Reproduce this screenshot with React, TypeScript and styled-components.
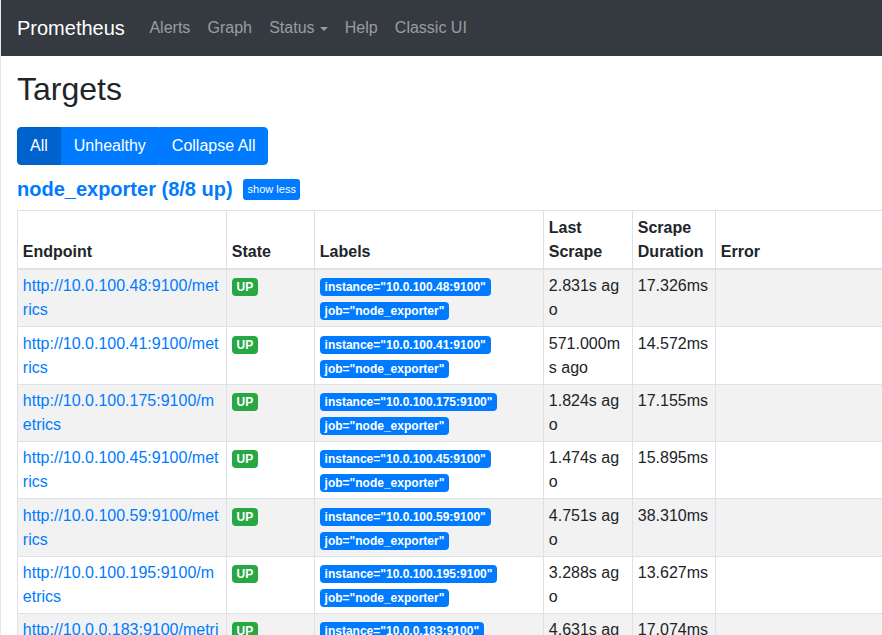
import React from "react";
import styled, { createGlobalStyle } from "styled-components";

const GlobalStyle = createGlobalStyle`
  html, body {
    margin: 0;
    padding: 0;
    overflow: hidden;
    background: #fff;
    font-family: "Liberation Sans", Arial, sans-serif;
    font-size: 16px;
    line-height: 1.5;
    color: #212529;
  }
  body {
    border-left: 1px solid #e4e9f0;
  }
`;

const Navbar = styled.nav`
  height: 56px;
  background: #343a40;
  display: flex;
  align-items: center;
  padding: 0 16px;
  box-sizing: border-box;
`;

const Brand = styled.a`
  color: #fff;
  font-size: 20px;
  line-height: 30px;
  margin-right: 16px;
  text-decoration: none;
`;

const NavLink = styled.a`
  color: rgba(255, 255, 255, 0.5);
  padding: 8px 8.6px;
  text-decoration: none;
  display: flex;
  align-items: center;
`;

const Caret = styled.span`
  display: inline-block;
  margin-left: 5px;
  border-top: 4.5px solid;
  border-right: 4.5px solid transparent;
  border-left: 4.5px solid transparent;
  margin-top: 1px;
`;

const Page = styled.main`
  padding: 0 0 0 16px;
`;

const Title = styled.h2`
  font-size: 32px;
  font-weight: 400;
  line-height: 1.2;
  margin: 14px 0 19px;
`;

const ButtonGroup = styled.div`
  display: inline-flex;
`;

const GroupButton = styled.button<{ $active?: boolean }>`
  font-family: inherit;
  font-size: 16px;
  line-height: 24px;
  padding: 6px 12px;
  border: 1px solid ${(p) => (p.$active ? "#005cbf" : "#007bff")};
  background: ${(p) => (p.$active ? "#0062cc" : "#007bff")};
  color: #fff;
  &:first-child {
    border-radius: 4px 0 0 4px;
  }
  &:last-child {
    border-radius: 0 4px 4px 0;
  }
`;

const JobHeader = styled.div`
  display: flex;
  align-items: center;
  margin: 12px 0 9px;
  height: 24px;
`;

const JobTitle = styled.a`
  color: #007bff;
  font-size: 20px;
  font-weight: 700;
  line-height: 24px;
  text-decoration: none;
`;

const SmallButton = styled.button`
  font-family: inherit;
  font-size: 11px;
  line-height: 15px;
  padding: 3px 4px 3px 5px;
  margin-left: 10px;
  border: none;
  border-radius: 3px;
  background: #007bff;
  color: #fff;
`;

const Table = styled.table`
  border-collapse: collapse;
  table-layout: fixed;
  width: 980px;
`;

const Th = styled.th`
  text-align: left;
  vertical-align: bottom;
  padding: 4.3px 4.8px;
  border: 1px solid #dee2e6;
  border-bottom: 2px solid #dee2e6;
  font-weight: 700;
  line-height: 24px;
`;

const Row = styled.tr<{ $striped: boolean }>`
  background: ${(p) => (p.$striped ? "#f2f2f2" : "#fff")};
`;

const Td = styled.td`
  vertical-align: top;
  padding: 4.2px 4.8px;
  border: 1px solid #dee2e6;
  line-height: 24px;
  word-break: break-all;
`;

const EndpointLink = styled.a`
  color: #007bff;
  text-decoration: none;
`;

const Badge = styled.span<{ $color: string }>`
  display: inline-block;
  background: ${(p) => p.$color};
  color: #fff;
  font-size: 12px;
  font-weight: 700;
  line-height: 1;
  padding: 3px 4.8px;
  border-radius: 4px;
  margin-right: 4px;
  white-space: nowrap;
  word-break: normal;
`;

const targets = [
  { host: "10.0.100.48", last: "2.831s ago", dur: "17.326ms" },
  { host: "10.0.100.41", last: "571.000ms ago", dur: "14.572ms" },
  { host: "10.0.100.175", last: "1.824s ago", dur: "17.155ms" },
  { host: "10.0.100.45", last: "1.474s ago", dur: "15.895ms" },
  { host: "10.0.100.59", last: "4.751s ago", dur: "38.310ms" },
  { host: "10.0.100.195", last: "3.288s ago", dur: "13.627ms" },
  { host: "10.0.0.183", last: "4.631s ago", dur: "17.074ms" },
];

export default function App() {
  return (
    <>
      <GlobalStyle />
      <Navbar>
        <Brand href="#">Prometheus</Brand>
        <NavLink href="#">Alerts</NavLink>
        <NavLink href="#">Graph</NavLink>
        <NavLink href="#">
          Status
          <Caret />
        </NavLink>
        <NavLink href="#">Help</NavLink>
        <NavLink href="#">Classic UI</NavLink>
      </Navbar>
      <Page>
        <Title>Targets</Title>
        <ButtonGroup>
          <GroupButton $active>All</GroupButton>
          <GroupButton>Unhealthy</GroupButton>
          <GroupButton>Collapse All</GroupButton>
        </ButtonGroup>
        <JobHeader>
          <JobTitle href="#">node_exporter (8/8 up)</JobTitle>
          <SmallButton>show less</SmallButton>
        </JobHeader>
        <Table>
          <colgroup>
            <col style={{ width: 209 }} />
            <col style={{ width: 88 }} />
            <col style={{ width: 229 }} />
            <col style={{ width: 89 }} />
            <col style={{ width: 83 }} />
            <col />
          </colgroup>
          <thead>
            <tr>
              <Th>Endpoint</Th>
              <Th>State</Th>
              <Th>Labels</Th>
              <Th>Last Scrape</Th>
              <Th>Scrape Duration</Th>
              <Th>Error</Th>
            </tr>
          </thead>
          <tbody>
            {targets.map((t, i) => (
              <Row key={t.host} $striped={i % 2 === 0}>
                <Td>
                  <EndpointLink href="#">{`http://${t.host}:9100/metrics`}</EndpointLink>
                </Td>
                <Td>
                  <Badge $color="#28a745">UP</Badge>
                </Td>
                <Td>
                  <Badge $color="#007bff">{`instance="${t.host}:9100"`}</Badge>
                  <Badge $color="#007bff">job="node_exporter"</Badge>
                </Td>
                <Td>{t.last}</Td>
                <Td>{t.dur}</Td>
                <Td />
              </Row>
            ))}
          </tbody>
        </Table>
      </Page>
    </>
  );
}
